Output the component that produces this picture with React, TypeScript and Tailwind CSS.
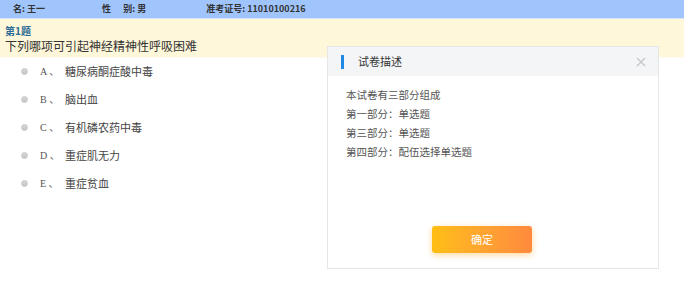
import React from 'react'

const OPTIONS = [
  { key: 'A', text: '糖尿病酮症酸中毒' },
  { key: 'B', text: '脑出血' },
  { key: 'C', text: '有机磷农药中毒' },
  { key: 'D', text: '重症肌无力' },
  { key: 'E', text: '重症贫血' },
]

const PARTS = ['本试卷有三部分组成', '第一部分：单选题', '第三部分：单选题', '第四部分：配伍选择单选题']

const cjk = "font-['Noto_Sans_CJK_SC',sans-serif]"

export default function App() {
  return (
    <div className={`relative w-[684px] h-[287px] overflow-hidden bg-white ${cjk}`}>
      {/* Candidate bar */}
      <div className="h-[19px] bg-[#a0c4fc] flex items-center text-[9px] font-bold text-[#333] border-b border-[#d6e4f7]">
        <span className="ml-[13px]">名: 王一</span>
        <span className="ml-[57px]">性&nbsp;&nbsp;&nbsp;&nbsp;&nbsp;&nbsp;别: 男</span>
        <span className="ml-[60px]">准考证号: 11010100216</span>
      </div>

      {/* Question stem */}
      <div className="h-[37px] bg-[#fff7d9] pl-[5px] pt-[6px] shadow-[0_1px_2px_#fdf1cd]">
        <div className="text-[10px] leading-[12px] font-bold text-[#2b6a96]">第1题</div>
        <div className="text-[12px] leading-[16px] text-[#333] mt-[1px]">下列哪项可引起神经精神性呼吸困难</div>
      </div>

      {/* Options */}
      <div className="pt-[1px]">
        {OPTIONS.map((o) => (
          <div key={o.key} className="h-[28px] flex items-center">
            <span className="ml-[21px] w-[7px] h-[7px] rounded-full bg-gradient-to-b from-[#d8d8d8] to-[#c4c4c4] border border-[#c8c8c8]" />
            <span className="ml-[12px] w-[25px] text-[10px] text-[#555] font-['Liberation_Serif','Noto_Sans_CJK_SC',serif]">
              {o.key} 、
            </span>
            <span className="text-[11px] text-[#444]">{o.text}</span>
          </div>
        ))}
      </div>

      {/* Paper description dialog */}
      <div className="absolute left-[327px] top-[46px] w-[332px] h-[223px] bg-white border border-[#e6e6e6] flex flex-col">
        <div className="h-[29px] bg-[#f4f5f7] flex items-center relative shrink-0">
          <span className="ml-[13px] w-[3px] h-[14px] bg-[#1e88e5]" />
          <span className="ml-[14px] text-[11px] text-[#333]">试卷描述</span>
          <svg className="absolute right-[12px] top-[10px]" width="10" height="10" viewBox="0 0 10 10">
            <path d="M1 1L9 9M9 1L1 9" stroke="#c8c8c8" strokeWidth="1.4" />
          </svg>
        </div>
        <div className="pt-[9px] pl-[18px] text-[10.5px] leading-[19px] text-[#555]">
          {PARTS.map((p) => (
            <div key={p}>{p}</div>
          ))}
        </div>
        <div className="mt-auto mb-[15px] flex">
          <button className="ml-[104px] w-[100px] h-[27px] rounded-[3px] bg-gradient-to-r from-[#ffbe12] to-[#ff8a3d] text-white text-[11px] shadow-[0_2px_6px_rgba(255,170,40,0.45)]">
            确定
          </button>
        </div>
      </div>
    </div>
  )
}
